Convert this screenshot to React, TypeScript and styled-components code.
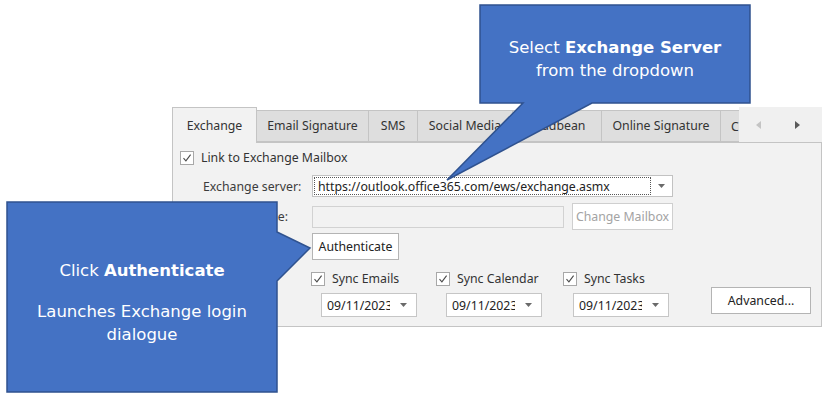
import React from "react";
import styled, { createGlobalStyle } from "styled-components";

const GlobalStyle = createGlobalStyle`
  html, body {
    margin: 0;
    padding: 0;
    background: #ffffff;
  }
`;

// page canvas
const Page = styled.div`
  position: relative;
  width: 827px;
  height: 398px;
  overflow: hidden;
  box-sizing: border-box;
  padding: 107px 0 0 172px;
  background: #ffffff;
`;

// dialog screenshot
const Dialog = styled.div`
  width: 650px;
  display: flex;
  flex-direction: column;
  font-family: "Noto Sans", "Liberation Sans", sans-serif;
  font-size: 12.3px;
  color: #333333;
`;

const TabStrip = styled.div`
  display: flex;
  align-items: flex-end;
  height: 35px;
  position: relative;
  z-index: 1;
`;

const Tab = styled.div<{ $w: number; $active?: boolean; $clipped?: boolean }>`
  flex: none;
  width: ${p => p.$w}px;
  height: ${p => (p.$active ? 36 : 32)}px;
  margin-bottom: ${p => (p.$active ? -1 : 0)}px;
  margin-right: -1px;
  box-sizing: border-box;
  display: flex;
  align-items: center;
  justify-content: ${p => (p.$clipped ? "flex-start" : "center")};
  padding: ${p => (p.$clipped ? "0 0 0 10px" : "0 0 1px")};
  white-space: nowrap;
  overflow: hidden;
  background: ${p => (p.$active ? "#f2f2f2" : "#dedede")};
  border: 1px solid #c4c4c4;
  border-bottom: ${p => (p.$active ? "none" : "1px solid #c4c4c4")};
  border-right: ${p => (p.$clipped ? "none" : "1px solid #c4c4c4")};
  color: #333333;
`;

const ScrollArea = styled.div`
  flex: 1;
  height: 35px;
  display: flex;
  align-items: center;
  gap: 34px;
  padding-left: 17px;
  background: #f0f0f0;
`;

const Body = styled.div`
  height: 185px;
  box-sizing: border-box;
  border: 1px solid #c4c4c4;
  background: #f2f2f2;
  padding: 7px 10px 0 7px;
  display: flex;
  flex-direction: column;
`;

const CheckRow = styled.label`
  display: flex;
  align-items: center;
  gap: 7px;
  height: 15px;
  white-space: nowrap;
  color: #333333;
`;

const Box = styled.span`
  flex: none;
  width: 14px;
  height: 14px;
  box-sizing: border-box;
  border: 1px solid #a8a8a8;
  background: #ffffff;
  display: flex;
  align-items: center;
  justify-content: center;
`;

const Form = styled.div`
  display: grid;
  grid-template-columns: 109px auto;
  align-items: center;
  margin: 10px 0 0 23px;
`;

const Label = styled.span<{ $top?: number }>`
  margin-top: ${p => p.$top || 0}px;
  color: #3c3c3c;
  white-space: nowrap;
`;

const Combo = styled.div`
  width: 361px;
  height: 22px;
  box-sizing: border-box;
  border: 1px solid #c2c2c2;
  background: #ffffff;
  display: flex;
  align-items: center;
  padding: 1px;
`;

const FocusText = styled.div`
  flex: 1;
  height: 100%;
  box-sizing: border-box;
  border: 1px dotted #555555;
  display: flex;
  align-items: center;
  padding-left: 3px;
  color: #222222;
  white-space: nowrap;
`;

const ArrowZone = styled.div<{ $w: number }>`
  flex: none;
  width: ${p => p.$w}px;
  display: flex;
  align-items: center;
  justify-content: center;
`;

const FieldRow = styled.div<{ $top: number }>`
  display: flex;
  align-items: center;
  gap: 8px;
  margin-top: ${p => p.$top}px;
`;

const TextBox = styled.div`
  width: 252px;
  height: 22px;
  box-sizing: border-box;
  border: 1px solid #d2d2d2;
  background: #f2f2f2;
`;

const Button = styled.div<{ $w: number; $disabled?: boolean }>`
  flex: none;
  width: ${p => p.$w}px;
  height: 27px;
  box-sizing: border-box;
  border: 1px solid ${p => (p.$disabled ? "#cfcfcf" : "#b4b4b4")};
  background: #ffffff;
  display: flex;
  align-items: center;
  justify-content: center;
  color: ${p => (p.$disabled ? "#a3a3a3" : "#222222")};
  white-space: nowrap;
`;

const Bottom = styled.div`
  display: flex;
  align-items: flex-end;
  margin: 11px 0 0 131px;
`;

const SyncGrid = styled.div`
  display: grid;
  grid-template-columns: 125px 127px 96px;
  row-gap: 7px;
`;

const DateBox = styled.div`
  width: 96px;
  height: 24px;
  margin-left: 10px;
  box-sizing: border-box;
  border: 1px solid #c6c6c6;
  background: #ffffff;
  display: flex;
  align-items: center;
  padding-left: 5px;
`;

const DateText = styled.span`
  width: 63px;
  margin-right: 3px;
  overflow: hidden;
  white-space: nowrap;
  color: #222222;
`;

const AdvancedButton = styled(Button)`
  margin-left: auto;
  margin-bottom: 3px;
`;

// callouts
const Callout = styled.div<{ $x: number; $y: number; $w: number; $h: number; $pad: number }>`
  position: absolute;
  left: ${p => p.$x}px;
  top: ${p => p.$y}px;
  width: ${p => p.$w}px;
  height: ${p => p.$h}px;
  box-sizing: border-box;
  padding-top: ${p => p.$pad}px;
  display: flex;
  flex-direction: column;
  align-items: center;
  justify-content: center;
  z-index: 5;
  color: #ffffff;
  font-family: "DejaVu Sans", "Liberation Sans", sans-serif;
  font-size: 16.5px;
  line-height: 23px;
  text-align: center;
`;

const CalloutShape = styled.svg`
  position: absolute;
  left: 0;
  top: 0;
  overflow: visible;
`;

const CalloutLine = styled.div<{ $gap?: number }>`
  position: relative;
  margin-top: ${p => p.$gap || 0}px;
  white-space: nowrap;
`;

const Check = () => (
  <Box>
    <svg width="10" height="10" viewBox="0 0 10 10">
      <path d="M1.5 5.2 L3.9 7.8 L8.6 1.6" fill="none" stroke="#4a4a4a" strokeWidth="1.1" />
    </svg>
  </Box>
);

const DownArrow = () => (
  <svg width="7" height="4" viewBox="0 0 7 4">
    <path d="M0 0 H7 L3.5 4 Z" fill="#6a6a6a" />
  </svg>
);

const tabs = [
  { label: "Exchange", w: 85, active: true },
  { label: "Email Signature", w: 113 },
  { label: "SMS", w: 50 },
  { label: "Social Media", w: 96 },
  { label: "Leadbean", w: 90 },
  { label: "Online Signature", w: 120 },
];

const sync = ["Sync Emails", "Sync Calendar", "Sync Tasks"];

const App: React.FC = () => {
  return (
    <Page>
      <GlobalStyle />
      <Dialog>
        <TabStrip>
          {tabs.map(t => (
            <Tab key={t.label} $w={t.w} $active={t.active}>
              {t.label}
            </Tab>
          ))}
          <Tab $w={20} $clipped>
            C
          </Tab>
          <ScrollArea>
            <svg width="5" height="8" viewBox="0 0 5 8">
              <path d="M5 0 V8 L0 4 Z" fill="#c4c4c4" />
            </svg>
            <svg width="5" height="8" viewBox="0 0 5 8">
              <path d="M0 0 V8 L5 4 Z" fill="#5a5a5a" />
            </svg>
          </ScrollArea>
        </TabStrip>

        <Body>
          <CheckRow>
            <Check />
            Link to Exchange Mailbox
          </CheckRow>

          <Form>
            <Label>Exchange server:</Label>
            <Combo>
              <FocusText>https://outlook.office365.com/ews/exchange.asmx</FocusText>
              <ArrowZone $w={20}>
                <DownArrow />
              </ArrowZone>
            </Combo>

            <Label $top={6}>Mailbox name:</Label>
            <FieldRow $top={6}>
              <TextBox />
              <Button $w={101} $disabled>
                Change Mailbox
              </Button>
            </FieldRow>

            <span />
            <FieldRow $top={3}>
              <Button $w={87}>Authenticate</Button>
            </FieldRow>
          </Form>

          <Bottom>
            <SyncGrid>
              {sync.map(s => (
                <CheckRow key={s}>
                  <Check />
                  {s}
                </CheckRow>
              ))}
              {sync.map(s => (
                <DateBox key={s + "-date"}>
                  <DateText>09/11/2023</DateText>
                  <ArrowZone $w={20}>
                    <DownArrow />
                  </ArrowZone>
                </DateBox>
              ))}
            </SyncGrid>
            <AdvancedButton $w={100}>Advanced...</AdvancedButton>
          </Bottom>
        </Body>
      </Dialog>

      <Callout $x={480} $y={5} $w={270} $h={98} $pad={10}>
        <CalloutShape width="270" height="98">
          <path
            d="M0 0 H270 V98 H112 L-33 175 L43 98 H0 Z"
            fill="#4472c4"
            stroke="#2f528f"
            strokeWidth="1.5"
          />
        </CalloutShape>
        <CalloutLine>
          Select <b>Exchange Server</b>
        </CalloutLine>
        <CalloutLine>from the dropdown</CalloutLine>
      </Callout>

      <Callout $x={7} $y={202} $w={270} $h={190} $pad={10}>
        <CalloutShape width="270" height="190">
          <path
            d="M0 0 H270 V30 L303 46 L270 79 V190 H0 Z"
            fill="#4472c4"
            stroke="#2f528f"
            strokeWidth="1.5"
          />
        </CalloutShape>
        <CalloutLine>
          Click <b>Authenticate</b>
        </CalloutLine>
        <CalloutLine $gap={18}>Launches Exchange login</CalloutLine>
        <CalloutLine>dialogue</CalloutLine>
      </Callout>
    </Page>
  );
};

export default App;
